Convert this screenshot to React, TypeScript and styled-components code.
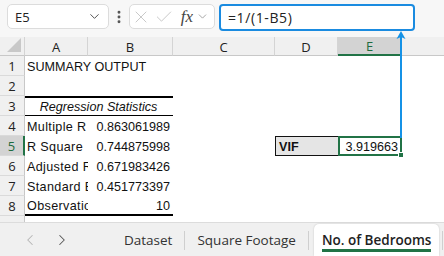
import { createGlobalStyle, styled } from 'styled-components';
import { ChevronDown, ChevronLeft, ChevronRight, X, Check, EllipsisVertical } from 'lucide-react';

const GlobalStyle = createGlobalStyle`
  html, body {
    margin: 0;
    padding: 0;
    background: #ffffff;
  }
  * {
    box-sizing: border-box;
  }
`;

const columns = ['A', 'B', 'C', 'D', 'E'];

const rows = [
  { label: 'SUMMARY OUTPUT', value: '', overflow: true },
  { label: '', value: '' },
  { label: 'Regression Statistics', value: '', title: true },
  { label: 'Multiple R', value: '0.863061989' },
  { label: 'R Square', value: '0.744875998' },
  { label: 'Adjusted R Square', value: '0.671983426' },
  { label: 'Standard Error', value: '0.451773397' },
  { label: 'Observations', value: '10', last: true },
];

export default function App() {
  return (
    <Page>
      <GlobalStyle />
      <TopBar>
        <NameBox>
          <span>E5</span>
          <ChevronDown size={15} strokeWidth={1.6} color="#555" />
        </NameBox>
        <Dots>
          <EllipsisVertical size={16} strokeWidth={2.4} color="#555" />
        </Dots>
        <FnBox>
          <X size={20} strokeWidth={1.1} color="#c4c4c4" />
          <Check size={20} strokeWidth={1.1} color="#c4c4c4" />
          <Fx>fx</Fx>
          <ChevronDown size={13} strokeWidth={1.6} color="#999" />
        </FnBox>
        <FormulaBox>=1/(1-B5)</FormulaBox>
      </TopBar>

      <Sheet>
        <Corner>
          <svg width="14" height="14" viewBox="0 0 14 14">
            <polygon points="14,0 14,14 0,14" fill="#c8c8c8" />
          </svg>
        </Corner>
        {columns.map((c) => (
          <ColHead key={c} $active={c === 'E'}>
            {c}
          </ColHead>
        ))}
        <ColHead $last />

        {rows.map((r, i) => {
          const n = i + 1;
          return [
            <RowHead key={`h${n}`} $active={n === 5}>
              {n}
            </RowHead>,
            r.title ? (
              <Cell key={`a${n}`} $span={2} $topThick $bottomThin $center>
                <em>{r.label}</em>
              </Cell>
            ) : (
              <Cell key={`a${n}`} $visible={r.overflow} $label $bottomThick={r.last}>
                {r.label}
              </Cell>
            ),
            r.title ? null : (
              <Cell key={`b${n}`} $right $bottomThick={r.last}>
                {r.value}
              </Cell>
            ),
            <Cell key={`c${n}`} />,
            n === 5 ? (
              <VifLabel key="d5">VIF</VifLabel>
            ) : (
              <Cell key={`d${n}`} />
            ),
            n === 5 ? (
              <Selected key="e5">
                3.919663
                <Handle />
              </Selected>
            ) : (
              <Cell key={`e${n}`} />
            ),
            <Cell key={`f${n}`} />,
          ];
        })}
        <RowHead $partial />
        <Filler />
      </Sheet>

      <TabBar>
        <Nav>
          <ChevronLeft size={18} strokeWidth={1.4} color="#b5b5b5" />
          <ChevronRight size={18} strokeWidth={1.4} color="#555" />
        </Nav>
        <Tab>Dataset</Tab>
        <Divider />
        <Tab>Square Footage</Tab>
        <Divider />
        <ActiveTab>
          <span>No. of Bedrooms</span>
        </ActiveTab>
        <Divider />
      </TabBar>

      <Arrow width="12" height="108" viewBox="0 0 12 108">
        <line x1="6" y1="4" x2="6" y2="108" stroke="#1592e6" strokeWidth="2" />
        <path d="M6 1 L10.5 9 L6 7 L1.5 9 Z" fill="#1592e6" />
      </Arrow>
    </Page>
  );
}

const Page = styled.div`
  position: relative;
  width: 444px;
  height: 256px;
  overflow: hidden;
  display: flex;
  flex-direction: column;
  background: #ffffff;
  font-family: 'Liberation Sans', Arial, sans-serif;
`;

const TopBar = styled.div`
  height: 37px;
  flex: none;
  display: flex;
  align-items: flex-start;
  padding: 4px 0 0 7px;
  background: #f7f7f7;
  font-family: 'Open Sans', sans-serif;
`;

const Box = styled.div`
  height: 25px;
  background: #ffffff;
  border: 1px solid #dcdcdc;
  border-radius: 5px;
  display: flex;
  align-items: center;
`;

const NameBox = styled(Box)`
  width: 102px;
  justify-content: space-between;
  padding: 0 6px 0 7px;
  font-size: 13px;
  color: #222;
`;

const Dots = styled.div`
  width: 20px;
  height: 25px;
  display: flex;
  align-items: center;
  justify-content: center;
`;

const FnBox = styled(Box)`
  width: 86px;
  padding: 0 5px 0 1px;
  gap: 1px;
  justify-content: space-between;
`;

const Fx = styled.span`
  font-family: 'Liberation Serif', 'DejaVu Serif', serif;
  font-style: italic;
  font-size: 17px;
  color: #444;
  margin-left: 4px;
  line-height: 1;
`;

const FormulaBox = styled.div`
  width: 196px;
  height: 27px;
  margin-left: 4px;
  border: 2px solid #1a8be0;
  border-radius: 4px;
  background: #ffffff;
  display: flex;
  align-items: center;
  padding-left: 7px;
  font-size: 14px;
  letter-spacing: 0.6px;
  color: #222;
`;

const Sheet = styled.div`
  flex: 1;
  display: grid;
  grid-template-columns: 25px 63px 85px 102px 63px 64px 1fr;
  grid-template-rows: 19px repeat(8, 20px) 1fr;
`;

const Corner = styled.div`
  background: #f0f0f0;
  border-right: 1px solid #d4d4d4;
  border-bottom: 1px solid #c8c8c8;
  display: flex;
  align-items: flex-end;
  justify-content: flex-end;
  padding: 0 3px 3px 0;
`;

const ColHead = styled.div<{ $active?: boolean; $last?: boolean }>`
  background: ${(p) => (p.$active ? '#d3d3d3' : '#f0f0f0')};
  border-right: ${(p) => (p.$last ? 'none' : '1px solid #d4d4d4')};
  border-bottom: ${(p) => (p.$active ? '2px solid #217346' : '1px solid #c8c8c8')};
  display: flex;
  align-items: center;
  justify-content: center;
  font-family: 'Open Sans', sans-serif;
  font-size: 13px;
  color: ${(p) => (p.$active ? '#1e6b3f' : '#222')};
  padding-top: 1px;
`;

const RowHead = styled.div<{ $active?: boolean; $partial?: boolean }>`
  background: ${(p) => (p.$active ? '#d3d3d3' : '#f0f0f0')};
  border-right: ${(p) => (p.$active ? '2px solid #217346' : '1px solid #c8c8c8')};
  border-bottom: ${(p) => (p.$partial ? 'none' : '1px solid #dadada')};
  display: flex;
  align-items: center;
  justify-content: center;
  font-family: 'Open Sans', sans-serif;
  font-size: 13px;
  color: ${(p) => (p.$active ? '#1e6b3f' : '#222')};
`;

const Cell = styled.div<{
  $span?: number;
  $visible?: boolean;
  $label?: boolean;
  $right?: boolean;
  $center?: boolean;
  $topThick?: boolean;
  $bottomThin?: boolean;
  $bottomThick?: boolean;
}>`
  grid-column: ${(p) => (p.$span ? `span ${p.$span}` : 'auto')};
  position: relative;
  z-index: ${(p) => (p.$visible ? 1 : 0)};
  display: flex;
  align-items: center;
  justify-content: ${(p) => (p.$right ? 'flex-end' : p.$center ? 'center' : 'flex-start')};
  padding: ${(p) => (p.$label ? '1px 0 0 2px' : '1px 3px 0 2px')};
  overflow: ${(p) => (p.$visible ? 'visible' : 'hidden')};
  white-space: nowrap;
  font-size: 12.6px;
  letter-spacing: ${(p) => (p.$label && !p.$visible ? '0.35px' : '0')};
  color: #111;
  border-top: ${(p) => (p.$topThick ? '2px solid #000' : 'none')};
  border-bottom: ${(p) =>
    p.$bottomThick ? '2px solid #000' : p.$bottomThin ? '1px solid #000' : 'none'};
`;

const VifLabel = styled.div`
  background: #e5e5e5;
  border: 1px solid #111;
  border-right: none;
  display: flex;
  align-items: center;
  padding: 1px 0 0 3px;
  font-size: 12.6px;
  font-weight: bold;
  color: #111;
`;

const Selected = styled.div`
  position: relative;
  border: 2px solid #217346;
  display: flex;
  align-items: center;
  justify-content: flex-end;
  padding: 1px 2px 0 0;
  font-size: 12.6px;
  color: #111;
`;

const Handle = styled.div`
  position: absolute;
  right: -4px;
  bottom: -4px;
  width: 6px;
  height: 6px;
  background: #217346;
  border: 1px solid #ffffff;
`;

const Filler = styled.div`
  grid-column: span 6;
`;

const TabBar = styled.div`
  height: 34px;
  flex: none;
  display: flex;
  align-items: stretch;
  background: #f0f0f0;
  border-top: 1px solid #dcdcdc;
  font-family: 'Open Sans', sans-serif;
  font-size: 13.5px;
  color: #333;
`;

const Nav = styled.div`
  width: 112px;
  display: flex;
  align-items: center;
  gap: 14px;
  padding-left: 21px;
`;

const Tab = styled.div`
  display: flex;
  align-items: center;
  padding: 0 12px;
`;

const Divider = styled.div`
  width: 1px;
  margin: 8px 0 6px;
  background: #cfcfcf;
`;

const ActiveTab = styled.div`
  margin: 1px 3px 0 5px;
  padding: 0 8px;
  background: #ffffff;
  border-radius: 5px 5px 0 0;
  box-shadow: 0 0 2px rgba(0, 0, 0, 0.18);
  display: flex;
  align-items: center;
  font-weight: 600;
  color: #222;

  span {
    border-bottom: 3px solid #217346;
    padding-top: 3px;
    line-height: 17px;
  }
`;

const Arrow = styled.svg`
  position: absolute;
  left: 395px;
  top: 30px;
`;
